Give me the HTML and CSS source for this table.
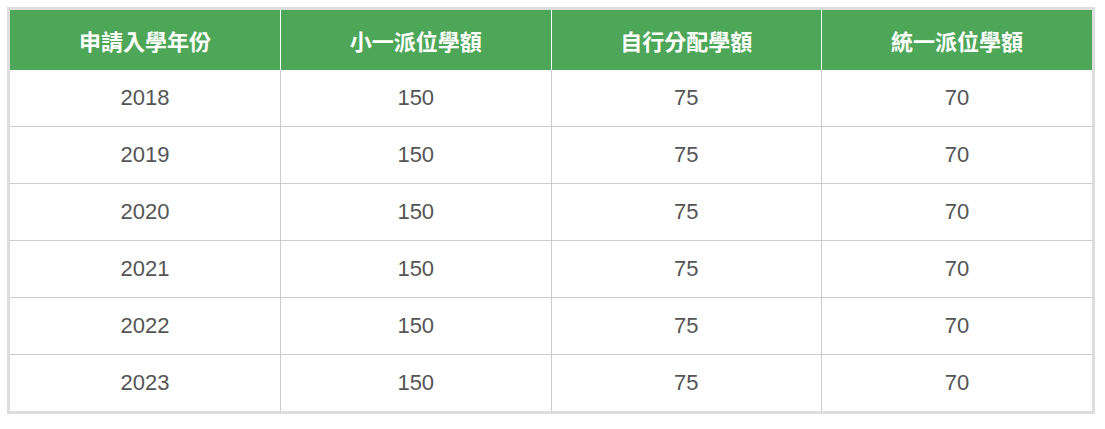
FILE: index.html
```html
<!DOCTYPE html>
<html lang="zh-Hant">
<head>
<meta charset="utf-8">
<title>學額</title>
<link rel="stylesheet" href="styles.css">
</head>
<body>
<div class="frame">
  <table class="quota">
    <thead>
      <tr>
        <th>申請入學年份</th>
        <th>小一派位學額</th>
        <th>自行分配學額</th>
        <th>統一派位學額</th>
      </tr>
    </thead>
    <tbody>
      <tr><td>2018</td><td>150</td><td>75</td><td>70</td></tr>
      <tr><td>2019</td><td>150</td><td>75</td><td>70</td></tr>
      <tr><td>2020</td><td>150</td><td>75</td><td>70</td></tr>
      <tr><td>2021</td><td>150</td><td>75</td><td>70</td></tr>
      <tr><td>2022</td><td>150</td><td>75</td><td>70</td></tr>
      <tr><td>2023</td><td>150</td><td>75</td><td>70</td></tr>
    </tbody>
  </table>
</div>
</body>
</html>
```
FILE: styles.css
```css
html, body {
  margin: 0;
  padding: 0;
  background: #ffffff;
}
body {
  padding: 7px;
  font-family: "Liberation Sans", Arial, "Noto Sans CJK TC", sans-serif;
}
.frame {
  width: 1082px;
  border: 3px solid #dddddd;
}
.quota {
  width: 100%;
  border-collapse: collapse;
  border-spacing: 0;
  table-layout: fixed;
}
.quota th {
  background: #4ea658;
  color: #ffffff;
  font-weight: bold;
  font-size: 22px;
  height: 60px;
  padding: 0;
  text-align: center;
  vertical-align: middle;
  border-right: 1px solid #ffffff;
}
.quota th:last-child {
  border-right: none;
}
.quota td {
  color: #555555;
  font-size: 22px;
  height: 56px;
  padding: 0;
  text-align: center;
  vertical-align: middle;
  border-right: 1px solid #cccccc;
  border-bottom: 1px solid #cccccc;
}
.quota td:last-child {
  border-right: none;
}
.quota tbody tr:last-child td {
  border-bottom: none;
}
```
